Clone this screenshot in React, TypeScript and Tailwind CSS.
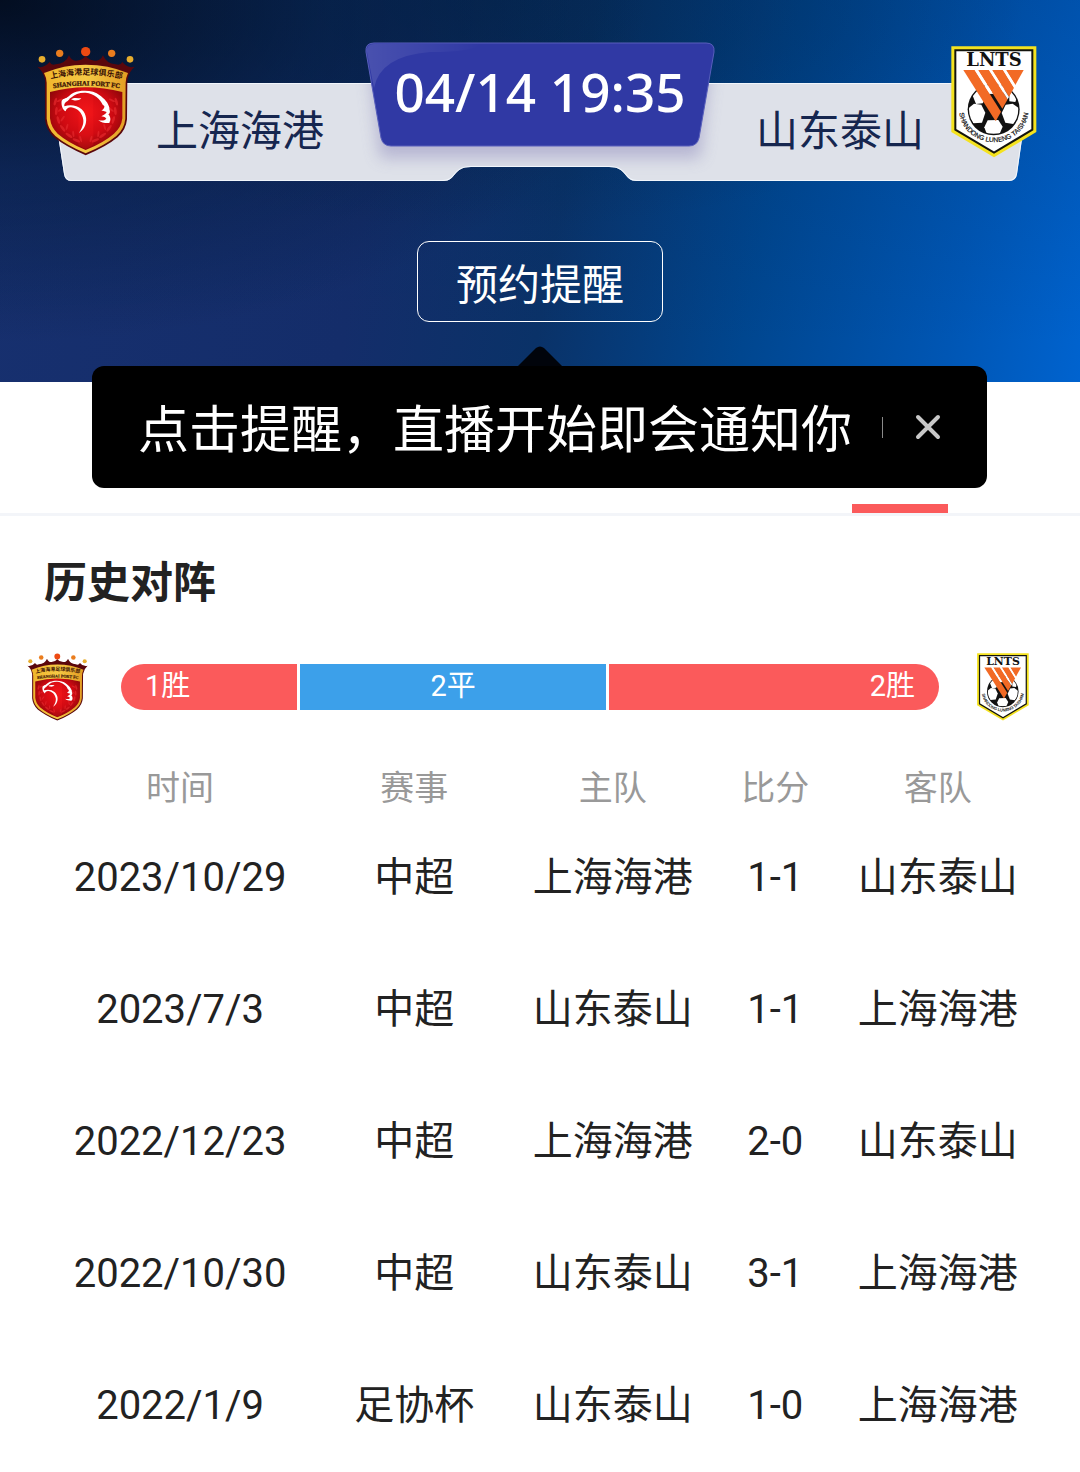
import { useState } from "react";

const matches = [
  { date: "2023/10/29", event: "中超", home: "上海海港", score: "1-1", away: "山东泰山" },
  { date: "2023/7/3", event: "中超", home: "山东泰山", score: "1-1", away: "上海海港" },
  { date: "2022/12/23", event: "中超", home: "上海海港", score: "2-0", away: "山东泰山" },
  { date: "2022/10/30", event: "中超", home: "山东泰山", score: "3-1", away: "上海海港" },
  { date: "2022/1/9", event: "足协杯", home: "山东泰山", score: "1-0", away: "上海海港" },
];

const leaves = [
  { x: 105, y: 215, r: 15 },
  { x: 108, y: 243, r: 5 },
  { x: 114, y: 270, r: -15 },
  { x: 127, y: 295, r: -35 },
  { x: 146, y: 316, r: -55 },
  { x: 168, y: 331, r: -65 },
];

function ShanghaiCrest({ className }: { className: string }) {
  return (
    <svg viewBox="50 48 294 330" className={className} role="img" aria-label="上海海港">
      <defs>
        <radialGradient id="shRed" cx="0.5" cy="0.4" r="0.65">
          <stop offset="0" stopColor="#f01318" />
          <stop offset="0.55" stopColor="#cf0a12" />
          <stop offset="1" stopColor="#7d0508" />
        </radialGradient>
        <linearGradient id="shGold" x1="0" y1="0" x2="1" y2="0">
          <stop offset="0" stopColor="#efb52c" />
          <stop offset="0.5" stopColor="#f5c945" />
          <stop offset="1" stopColor="#e39c22" />
        </linearGradient>
        <path id="shArcTop" d="M82 149 Q196 119 314 149" />
        <path id="shArcLow" d="M85 177 Q196 156 312 177" />
      </defs>
      <circle cx="65" cy="88" r="10" fill="#e8ae2e" />
      <circle cx="118" cy="70" r="11" fill="#ea7d1e" />
      <circle cx="196" cy="65" r="14" fill="#ee4a12" />
      <circle cx="274" cy="70" r="11" fill="#ea7d1e" />
      <circle cx="329" cy="88" r="10" fill="#e8ae2e" />
      {/* crown and outer edge */}
      <path
        d="M51 110 Q70 116 88 96 Q94 108 106 103 Q136 101 146 76 Q154 94 168 92 Q184 92 196 78 Q208 92 224 92 Q240 94 248 76 Q258 101 286 103 Q300 108 306 96 Q322 116 343 110 Q326 124 321 150 L320 268 Q317 300 292 322 Q258 350 196 376 Q136 350 101 322 Q77 300 74 268 L74 150 Q70 124 51 110Z"
        fill="#5a070c"
      />
      <path
        d="M71 129 Q130 104 196 104 Q264 104 323 129 Q317 142 316 158 L315 266 Q312 297 288 318 Q254 346 196 370 Q139 346 105 318 Q82 297 79 266 L79 158 Q78 142 71 129Z"
        fill="url(#shGold)"
      />
      <path
        d="M89 186 Q196 158 306 186 L306 265 Q303 292 281 311 Q250 338 196 360 Q143 338 112 311 Q92 292 89 265Z"
        fill="url(#shRed)"
      />
      <path d="M174 174 H219 V345 L196 358 L174 345Z" fill="#ff2020" opacity="0.22" />
      {leaves.map((l) => (
        <g key={l.y} fill="#e3262a" opacity="0.75">
          <ellipse cx={l.x} cy={l.y} rx="4" ry="12" transform={`rotate(${l.r} ${l.x} ${l.y})`} />
          <ellipse cx={l.x + 13} cy={l.y - 4} rx="3" ry="10" transform={`rotate(${l.r + 50} ${l.x + 13} ${l.y - 4})`} />
          <ellipse cx={393 - l.x} cy={l.y} rx="4" ry="12" transform={`rotate(${-l.r} ${393 - l.x} ${l.y})`} />
          <ellipse cx={380 - l.x} cy={l.y - 4} rx="3" ry="10" transform={`rotate(${-l.r - 50} ${380 - l.x} ${l.y - 4})`} />
        </g>
      ))}
      {/* eagle head */}
      <g fill="#fff">
        <path d="M128 209 C144 203 148 193 160 188 C184 179 220 180 238 196 C252 206 264 218 268 236 C258 231 252 228 247 224 C240 207 222 191 196 188 C178 187 163 193 154 202 C146 208 138 211 128 209Z" />
        <path d="M124 212 C132 202 142 206 150 205 L142 213 C134 217 131 222 132 229 C150 223 170 226 184 238 C200 254 201 276 192 292 C188 300 182 304 176 309 C183 296 190 286 189 270 C186 248 170 234 152 232 C143 232 137 237 136 244 C127 239 122 226 124 212Z" />
        <path d="M152 208 C162 201 173 205 183 205 C178 211 168 213 160 211Z" />
        <path d="M251 218 C256 220 265 228 268 240 C270 246 268 251 264 253 C272 262 271 270 267 279 C256 280 242 278 234 270 C243 273 253 272 258 266 C253 259 247 260 243 259 C251 254 257 251 259 246 C253 244 247 243 243 241 C252 238 254 230 251 218Z" />
      </g>
      <text fontSize="24" fontWeight="700" fill="#3a1205" fontFamily="'Noto Sans CJK SC', sans-serif">
        <textPath href="#shArcTop" startOffset="50%" textAnchor="middle">上海海港足球俱乐部</textPath>
      </text>
      <text fontSize="20" fontWeight="700" fill="#3a1205" stroke="#3a1205" strokeWidth="0.8" fontFamily="'Liberation Serif', serif">
        <textPath href="#shArcLow" startOffset="50%" textAnchor="middle">SHANGHAI PORT FC</textPath>
      </text>
    </svg>
  );
}

function ShandongCrest({ className }: { className: string }) {
  return (
    <svg viewBox="66 46 256 336" className={className} role="img" aria-label="山东泰山">
      <defs>
        <clipPath id="sdBall">
          <circle cx="193" cy="236" r="74" />
        </clipPath>
        <path id="sdArc" d="M90 246 A104 98 0 0 0 297 246" />
      </defs>
      <path d="M66 47 H321 V304 L194 380 L66 304Z" fill="#f4e21f" />
      <path d="M78 59 H309 V297 L194 366 L78 297Z" fill="#fff" stroke="#14140c" strokeWidth="6" />
      <text x="194" y="107" textAnchor="middle" fontSize="54" fontWeight="700" fill="#111" fontFamily="'DejaVu Serif', serif">
        LNTS
      </text>
      {/* football */}
      <circle cx="193" cy="236" r="78" fill="#111" />
      <g clipPath="url(#sdBall)" fill="#fff">
        <path d="M128 190 L150 172 L170 200 L160 218 L140 220Z" />
        <path d="M118 232 L134 219 L156 222 L168 246 L158 276 L132 278 L119 258Z" />
        <path d="M175 269 L207 268 L220 288 L211 309 L172 309 L165 290Z" />
        <path d="M229 222 L250 219 L268 232 L268 258 L252 280 L228 276 L217 247Z" />
        <path d="M156 162 L182 156 L210 158 L230 164 L222 186 L188 190 L165 186Z" />
        <path d="M240 194 L252 172 L264 196 L258 214 L240 212Z" />
      </g>
      {/* striped W */}
      <g fill="#f26a25">
        <path d="M102 118 H136 L215 243 L200 270 H198Z" />
        <path d="M146 118 H179 L235 206 L219 234Z" />
        <path d="M188 118 H221 L254 171 L239 199Z" />
        <path d="M230 118 H283 L258 163Z" />
      </g>
      <path d="M136 118 H146 L188 185 L182 191Z M179 118 H188 L239 199 L235 206Z M221 118 H230 L258 163 L254 171Z" fill="#fff" />
      <text fontSize="20" fill="#111" stroke="#111" strokeWidth="0.6" fontFamily="'Liberation Sans', sans-serif">
        <textPath href="#sdArc" startOffset="50%" textAnchor="middle">SHANDONG LUNENG TAISHAN</textPath>
      </text>
    </svg>
  );
}

// Team plate with the kick-off badge in front of it
function Scoreboard() {
  return (
    <svg
      viewBox="0 42 1080 139"
      preserveAspectRatio="none"
      className="absolute inset-0 w-full h-full overflow-visible"
      aria-hidden="true"
    >
      <defs>
        <filter id="badgeShadow" x="-10%" y="-20%" width="120%" height="160%">
          <feGaussianBlur stdDeviation="8" />
        </filter>
        <linearGradient id="badgeShine" x1="0" y1="0" x2="1" y2="0">
          <stop offset="0" stopColor="#fff" stopOpacity="0.12" />
          <stop offset="1" stopColor="#fff" stopOpacity="0" />
        </linearGradient>
        <clipPath id="plateClip">
          <path d="M50 83 H1030 L1017 174 Q1016 181 1009 181 H637 C623 181 628 167 609 167 H471 C452 167 457 181 443 181 H71 Q65 181 64 174Z" />
        </clipPath>
      </defs>
      <path
        d="M50 83 H1030 L1017 174 Q1016 181 1009 181 H637 C623 181 628 167 609 167 H471 C452 167 457 181 443 181 H71 Q65 181 64 174Z"
        fill="#dee1e9"
      />
      <g clipPath="url(#plateClip)">
        <path d="M369 60 H711 L700 158 H380Z" fill="#7a74b0" opacity="0.4" filter="url(#badgeShadow)" />
        <path
          d="M50 83 H1030 L1017 174 Q1016 181 1009 181 H637 C623 181 628 167 609 167 H471 C452 167 457 181 443 181 H71 Q65 181 64 174Z"
          fill="none"
          stroke="#f1f6fc"
          strokeWidth="2"
        />
      </g>
      <path
        d="M374 43 H706 Q715 43 714 52 L699 138 Q697 146 689 146 H391 Q383 146 381 138 L366 52 Q365 43 374 43Z"
        fill="#3039a4"
        stroke="#585fbb"
        strokeWidth="1"
      />
      <path d="M374 44 H480 Q474 52 430 52 Q380 56 374 88 L367 52 Q366 44 374 44Z" fill="url(#badgeShine)" />
    </svg>
  );
}

export default function App() {
  const [showTip, setShowTip] = useState(true);

  return (
    <main className="min-h-screen bg-white text-[#222] font-['Roboto','Noto_Sans_CJK_SC',sans-serif]">
      <header className="relative pt-[42px] pb-[60px] bg-[radial-gradient(ellipse_60%_90%_at_0%_0%,rgba(0,8,20,0.85),rgba(0,20,45,0.4)_50%,transparent),radial-gradient(ellipse_50%_60%_at_45%_0%,rgba(0,35,70,0.5),transparent),linear-gradient(180deg,rgba(0,40,90,0.2),transparent_90%),linear-gradient(100deg,#17306f_0%,#142d6a_35%,#0a3268_52%,#00468f_70%,#0056b4_88%,#0063cf_100%)]">
        <div className="relative grid grid-cols-[1fr_350px_1fr] h-[139px]">
          <Scoreboard />
          <div className="relative flex items-start pl-[37px] pt-1">
            <ShanghaiCrest className="w-[98px] h-[110px]" />
            <span className="ml-[21px] pt-[56px] text-[42px] leading-[60px] text-[#16264f]">上海海港</span>
          </div>
          <time className="relative pt-5 text-center text-[53px] leading-[60px] font-medium text-white font-['Noto_Sans','Open_Sans',sans-serif]">
            04/14 19:35
          </time>
          <div className="relative flex items-start justify-end pr-[43px] pt-1">
            <span className="mr-[27px] pt-[56px] text-[42px] leading-[60px] text-[#16264f]">山东泰山</span>
            <ShandongCrest className="w-[86px] h-[112px]" />
          </div>
        </div>

        <button
          type="button"
          className="block mx-auto mt-[60px] w-[246px] h-[81px] pt-2 rounded-xl border border-white text-[42px] leading-[60px] text-white"
        >
          预约提醒
        </button>

        {showTip && (
          <div className="absolute top-full -mt-4 left-[92px] right-[93px] z-10 h-[122px] flex items-center rounded-xl bg-black px-[46px] text-white">
            <svg viewBox="0 0 44 20" className="absolute bottom-full left-1/2 -ml-[22px] w-[44px] h-[20px]" aria-hidden="true">
              <path d="M0 20 L18 2 Q22 -1 26 2 L44 20Z" fill="#01040b" />
            </svg>
            <p className="flex-1 pt-2 text-[51px] leading-[60px] whitespace-nowrap">点击提醒，直播开始即会通知你</p>
            <span className="w-px h-[21px] bg-[#8a8a8a]" />
            <button type="button" aria-label="关闭" onClick={() => setShowTip(false)} className="ml-8">
              <svg viewBox="0 0 26 26" className="w-[26px] h-[26px]" fill="none" stroke="#c8c8c8" strokeWidth="4" strokeLinecap="round">
                <path d="M3 3 L23 23 M23 3 L3 23" />
              </svg>
            </button>
          </div>
        )}
      </header>

      <nav className="flex justify-end items-end h-[134px] border-b-[3px] border-[#f3f5f9] pr-[132px]">
        <span className="w-24 h-[9px] bg-[#fb5a5b]" />
      </nav>

      <section>
        <h2 className="pl-[44px] pt-[37px] text-[43px] leading-[60px] font-bold">历史对阵</h2>

        <div className="flex items-center mt-[40px] pl-[27px] pr-[50px]">
          <ShanghaiCrest className="w-[61px] h-[68px]" />
          <div className="flex-1 grid grid-cols-[176fr_307fr_330fr] gap-[3px] ml-[33px] mr-[37px] h-[46px] rounded-full overflow-hidden text-[29px] leading-[44px] text-white">
            <div className="bg-[#fb5a5b] pl-6">1胜</div>
            <div className="bg-[#3ca0ea] text-center">2平</div>
            <div className="bg-[#fb5a5b] pr-6 text-right">2胜</div>
          </div>
          <ShandongCrest className="w-[54px] h-[68px]" />
        </div>

        <div className="mt-[42px] pl-[63px] pr-[61px]">
          <table className="w-full table-fixed text-center">
            <thead>
              <tr className="h-[49px] text-[34px] leading-[48px] text-[#999]">
                <th className="w-[24.5%] p-0 font-normal">时间</th>
                <th className="w-[24.5%] p-0 font-normal">赛事</th>
                <th className="w-[17%] p-0 font-normal">主队</th>
                <th className="w-[17%] p-0 font-normal">比分</th>
                <th className="w-[17%] p-0 font-normal">客队</th>
              </tr>
            </thead>
            <tbody className="text-[40px] leading-[60px] whitespace-nowrap">
              {matches.map((m) => (
                <tr key={m.date} className="h-[132px]">
                  <td>{m.date}</td>
                  <td>{m.event}</td>
                  <td>{m.home}</td>
                  <td>{m.score}</td>
                  <td>{m.away}</td>
                </tr>
              ))}
            </tbody>
          </table>
        </div>
      </section>
    </main>
  );
}
